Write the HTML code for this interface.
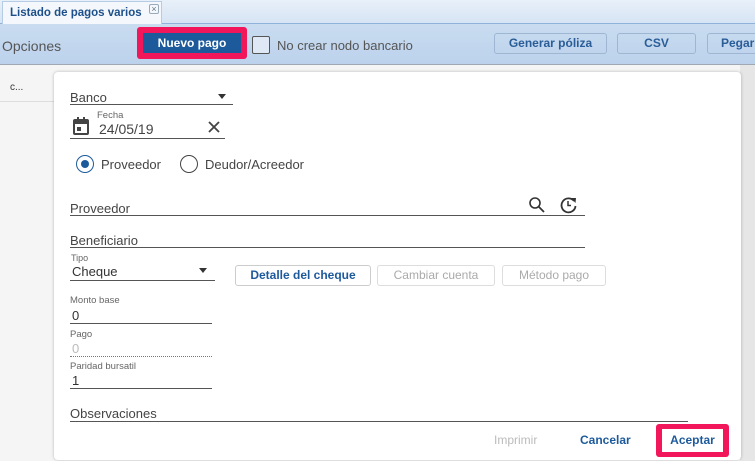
<!DOCTYPE html>
<html><head><style>
*{box-sizing:border-box;margin:0;padding:0}
body{width:755px;height:461px;overflow:hidden;font-family:"Liberation Sans",sans-serif;background:#f2f2f2;position:relative;color:#333}
.abs{position:absolute;white-space:nowrap}
.tabbar{left:0;top:0;width:755px;height:24px;background:linear-gradient(#e8f0f9,#d6e4f4);border-bottom:1px solid #8fb2dc}
.tab{left:2px;top:1px;width:160px;height:23px;background:#f4f8fc;border:1px solid #b6cbe4;border-bottom:none;font-size:11.5px;font-weight:bold;color:#1d4f8a;padding:5px 0 0 7px}
.tb{left:0;top:24px;width:755px;height:41px;background:linear-gradient(#c9dcf0,#bcd2ec);border-bottom:1px solid #a0a8b4}
.btn{height:21px;border:1px solid #9fb6d2;border-radius:3px;font-size:12px;font-weight:bold;color:#2a5d97;text-align:center;line-height:19px}
.lbl{font-size:12.5px;color:#444}
.small{font-size:9.5px;color:#666}
.line{height:1px;background:#555}
.dlg{left:54px;top:72px;width:687px;height:388px;background:#fff;border-radius:4px;box-shadow:0 0 3px rgba(0,0,0,.25)}
.ob{height:21px;border:1px solid #ccc;border-radius:3px;font-size:12px;text-align:center;line-height:19px;background:#fff}
</style></head><body>
<div class="abs tabbar"></div>
<div class="abs tab">Listado de pagos varios</div>
<div class="abs" style="left:149px;top:4px;width:10px;height:10px;border:1px solid #9ab;border-radius:2px;font-size:9px;line-height:8px;text-align:center;color:#678">×</div>
<div class="abs tb"></div>
<div class="abs" style="left:2px;top:38px;font-size:14px;color:#555">Opciones</div>
<div class="abs" style="left:137px;top:27px;width:110px;height:32px;background:#f2175a;border-radius:3px"></div>
<div class="abs" style="left:143px;top:33px;width:98px;height:20px;background:#1d5a9c;color:#fff;font-size:12px;font-weight:bold;text-align:center;line-height:20px">Nuevo pago</div>
<div class="abs" style="left:252px;top:36px;width:18px;height:18px;border:1.5px solid #555;border-radius:2px;background:#dfe9f5"></div>
<div class="abs" style="left:277px;top:38px;font-size:13px;color:#555">No crear nodo bancario</div>
<div class="abs btn" style="left:494px;top:33px;width:113px">Generar póliza</div>
<div class="abs btn" style="left:617px;top:33px;width:79px">CSV</div>
<div class="abs btn" style="left:707px;top:33px;width:60px;text-align:left;padding-left:13px">Pegar</div>
<div class="abs" style="left:0;top:65px;width:755px;height:396px;background:#f5f5f5"></div>
<div class="abs" style="left:0;top:72px;width:54px;height:30px;border-bottom:1px solid #ddd;font-size:10px;color:#333;padding:10px 0 0 10px">c...</div>
<div class="abs" style="left:740px;top:65px;width:15px;height:396px;background:#e6e6e6"></div>
<div class="abs dlg"></div>
<div class="abs lbl" style="left:70px;top:90px;font-size:13px">Banco</div>
<div class="abs" style="left:218px;top:94px;border:4px solid transparent;border-top:5px solid #333;border-bottom:none;width:0"></div>
<div class="abs line" style="left:70px;top:104px;width:163px"></div>
<svg class="abs" style="left:73px;top:117px" width="16" height="18" viewBox="0 0 16 18"><rect x="1" y="3" width="14" height="14" rx="1" fill="none" stroke="#444" stroke-width="2"/><rect x="1" y="3" width="14" height="4" fill="#444"/><rect x="4" y="0" width="2" height="4" fill="#444"/><rect x="10" y="0" width="2" height="4" fill="#444"/><rect x="4" y="10" width="4" height="4" fill="#444"/></svg>
<div class="abs small" style="left:97px;top:110px">Fecha</div>
<div class="abs" style="left:99px;top:121px;font-size:14px;color:#444">24/05/19</div>
<svg class="abs" style="left:208px;top:121px" width="12" height="12"><path d="M1 1L11 11M11 1L1 11" stroke="#444" stroke-width="1.8"/></svg>
<div class="abs line" style="left:70px;top:138px;width:155px"></div>
<div class="abs" style="left:76px;top:155px;width:18px;height:18px;border:1.5px solid #1d5a9c;border-radius:50%"></div>
<div class="abs" style="left:81px;top:160px;width:8px;height:8px;background:#1d5a9c;border-radius:50%"></div>
<div class="abs lbl" style="left:101px;top:157px;font-size:13px">Proveedor</div>
<div class="abs" style="left:180px;top:155px;width:18px;height:18px;border:1.3px solid #444;border-radius:50%"></div>
<div class="abs lbl" style="left:205px;top:157px;font-size:13px">Deudor/Acreedor</div>
<div class="abs lbl" style="left:70px;top:201px;font-size:13px">Proveedor</div>
<svg class="abs" style="left:528px;top:196px" width="18" height="18"><circle cx="7" cy="7" r="5" fill="none" stroke="#333" stroke-width="1.6"/><path d="M11 11L16 16" stroke="#333" stroke-width="1.8"/></svg>
<svg class="abs" style="left:560px;top:196px" width="18" height="18"><path d="M14 5A7 7 0 1 0 15.5 10" fill="none" stroke="#333" stroke-width="1.8"/><path d="M11 2L16 2L15.5 7Z" fill="#333"/><path d="M8 5V9.5H11" fill="none" stroke="#333" stroke-width="1.5"/></svg>
<div class="abs line" style="left:70px;top:215px;width:515px"></div>
<div class="abs lbl" style="left:70px;top:233px;font-size:13px">Beneficiario</div>
<div class="abs line" style="left:70px;top:247px;width:515px"></div>
<div class="abs small" style="left:71px;top:253px;font-size:9px">Tipo</div>
<div class="abs" style="left:72px;top:264px;font-size:13px;color:#333">Cheque</div>
<div class="abs" style="left:199px;top:268px;border:4px solid transparent;border-top:5px solid #333;border-bottom:none;width:0"></div>
<div class="abs line" style="left:70px;top:280px;width:145px"></div>
<div class="abs ob" style="left:235px;top:265px;width:136px;color:#1d5a9c;font-weight:bold">Detalle del cheque</div>
<div class="abs ob" style="left:377px;top:265px;width:118px;color:#aaa;border-color:#ddd">Cambiar cuenta</div>
<div class="abs ob" style="left:502px;top:265px;width:104px;color:#aaa;border-color:#ddd">Método pago</div>
<div class="abs small" style="left:70px;top:295px">Monto base</div>
<div class="abs" style="left:72px;top:308px;font-size:13px">0</div>
<div class="abs line" style="left:70px;top:323px;width:142px"></div>
<div class="abs small" style="left:70px;top:329px">Pago</div>
<div class="abs" style="left:72px;top:341px;font-size:13px;color:#bbb">0</div>
<div class="abs" style="left:70px;top:356px;width:142px;border-top:1px dotted #777"></div>
<div class="abs small" style="left:70px;top:361px">Paridad bursatil</div>
<div class="abs" style="left:72px;top:373px;font-size:13px">1</div>
<div class="abs line" style="left:70px;top:388px;width:142px"></div>
<div class="abs lbl" style="left:70px;top:406px;font-size:13px">Observaciones</div>
<div class="abs line" style="left:70px;top:421px;width:618px"></div>
<div class="abs" style="left:494px;top:433px;font-size:12px;color:#bbb">Imprimir</div>
<div class="abs" style="left:580px;top:433px;font-size:12px;font-weight:bold;color:#1d5a9c">Cancelar</div>
<div class="abs" style="left:656px;top:424px;width:73px;height:33px;background:#f2175a;border-radius:3px"></div>
<div class="abs" style="left:662px;top:429px;width:61px;height:23px;background:#fff;font-size:12px;font-weight:bold;color:#1d5a9c;text-align:center;line-height:23px">Aceptar</div>
</body></html>
